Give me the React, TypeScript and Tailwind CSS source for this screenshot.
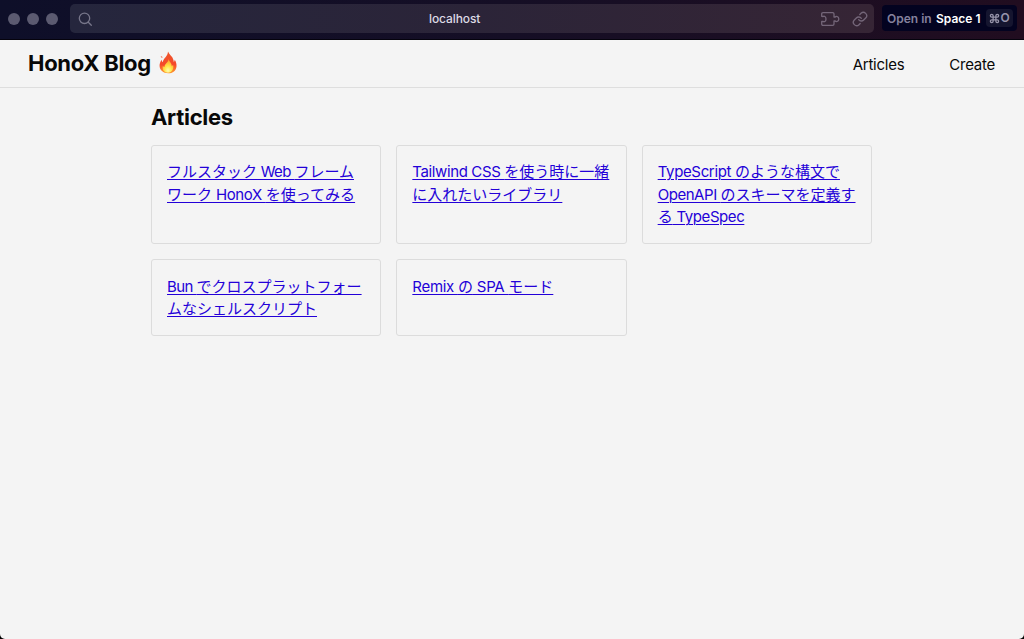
import React from 'react';

type Run = { text: string; latin?: string };

const articles: Run[][][] = [
  [
    [{ text: 'フルスタック' }, { text: ' Web ', latin: 'tracking-[-0.6px]' }, { text: 'フレーム' }],
    [{ text: 'ワーク' }, { text: ' HonoX ', latin: 'tracking-[-0.35px]' }, { text: 'を使ってみる' }],
  ],
  [
    [{ text: 'Tailwind CSS ', latin: 'tracking-[-0.38px]' }, { text: 'を使う時に一緒' }],
    [{ text: 'に入れたいライブラリ' }],
  ],
  [
    [{ text: 'TypeScript ', latin: 'tracking-[-0.35px]' }, { text: 'のような構文で' }],
    [{ text: 'OpenAPI ', latin: 'tracking-[-0.45px]' }, { text: 'のスキーマを定義す' }],
    [{ text: 'る' }, { text: ' TypeSpec', latin: 'tracking-[-0.42px]' }],
  ],
  [
    [{ text: 'Bun ', latin: 'tracking-[-0.55px]' }, { text: 'でクロスプラットフォー' }],
    [{ text: 'ムなシェルスクリプト' }],
  ],
  [
    [{ text: 'Remix ', latin: 'tracking-[-0.3px]' }, { text: 'の' }, { text: ' SPA ', latin: 'tracking-[-0.3px]' }, { text: 'モード' }],
  ],
];

function Flame() {
  return (
    <svg viewBox="0 0 20 24" className="h-[23px] w-[20px]" aria-hidden="true">
      <defs>
        <linearGradient id="outer" x1="0" y1="0" x2="0" y2="1">
          <stop offset="0" stopColor="#ed582b" />
          <stop offset="0.6" stopColor="#f5482a" />
          <stop offset="1" stopColor="#ff9a2e" />
        </linearGradient>
        <radialGradient id="inner" cx="0.5" cy="0.85" r="0.8">
          <stop offset="0" stopColor="#fffbb0" />
          <stop offset="0.4" stopColor="#ffe64a" />
          <stop offset="1" stopColor="#ff9526" />
        </radialGradient>
      </defs>
      <path d="M10 .5c1 3 4.700 5 5.600 8.500.4 1 .3 1.800.4 2.500.7-.6 1-1.400 1-2.300 1.500 2.300 2 4.300 1.900 6.600C18.600 20.300 15 23.300 10.200 23.300 5 23.300 1.200 20 1.200 15.500c0-2.800 1-4.700 2.100-6.500.2 1.200.5 2 1.200 2.700C5.200 7.500 9.800 5.500 10 .5z" fill="url(#outer)" />
      <path d="M10.700 8c.2 3.200 3.400 4.200 3.200 7.800.7-.3 1.100-.8 1.400-1.500 1.200 4.300-1.200 8.300-5.200 8.300-4.200 0-6.500-3.300-5.500-7.300.5.900 1 1.300 1.700 1.500C6.300 13 10.500 12 10.700 8z" fill="url(#inner)" />
      <path d="M2.500 5.200c1.300.2 2 1 1.600 2.200C3 7 2.400 6.300 2.500 5.200z" fill="#f47b61" />
    </svg>
  );
}

function BrowserBar() {
  return (
    <div className="flex h-10 shrink-0 items-start border-b border-[#05030d] bg-linear-to-r from-[#0e0f29] via-[#150e25] to-[#210d20]">
      <div className="flex h-[38px] w-[70px] items-center gap-[7px] pl-2">
        <i className="size-3 rounded-full bg-[#5b5a70]" />
        <i className="size-3 rounded-full bg-[#5b5a70]" />
        <i className="size-3 rounded-full bg-[#5b5a70]" />
      </div>
      <div className="mt-1 flex h-[29px] w-[804px] items-center rounded-[5px] bg-linear-to-r from-[#25263d] via-[#2b2438] to-[#362535] pr-1.5 pl-2">
        <svg viewBox="0 0 14 14" className="size-[14px] fill-none stroke-[#77768a] stroke-[1.3]">
          <circle cx="6.500" cy="6.300" r="5.200" />
          <path d="m10.300 10.200 3 3" strokeLinecap="round" />
        </svg>
        <span className="ml-[337px] w-[53px] pt-px text-[12px] leading-4 font-medium tracking-[-0.1px] text-[#dddae5]">localhost</span>
        <span className="flex-1" />
        <svg viewBox="0 0 20 16" className="mr-3 h-4 w-5 fill-none stroke-[#746679] stroke-[1.3]" strokeLinejoin="round">
          <path d="M1.700 5.300V3Q1.700 1.700 3 1.700H12.700Q14 1.700 14 3V6H15.200C15.800 5.200 18.800 5 18.800 8S15.800 10.800 15.200 10H14V13Q14 14.300 12.700 14.300H3Q1.700 14.300 1.700 13V10.500H3.200C4 11 6 10.800 6 8S4 5 3.200 5.500Z" />
        </svg>
        <svg viewBox="0 0 24 24" className="size-4 fill-none stroke-[#746679] stroke-2" strokeLinecap="round" strokeLinejoin="round">
          <path d="M10 13a5 5 0 0 0 7.540.540l3-3a5 5 0 0 0-7.070-7.070l-1.720 1.710" />
          <path d="M14 11a5 5 0 0 0-7.540-.540l-3 3a5 5 0 0 0 7.070 7.070l1.710-1.710" />
        </svg>
      </div>
      <div className="mt-[5px] ml-2 flex h-[26px] w-[135px] items-center rounded-[4px] bg-[#030320] pl-[5px] text-[12px] font-semibold whitespace-nowrap">
        <span className="w-[49px] pt-px text-[#85819d]">Open in</span>
        <span className="w-[50px] pt-px text-white">Space 1</span>
        <span className="flex h-[18px] w-[27px] items-center justify-center rounded-[4px] bg-[#15152f] text-[#9794aa]">
          <svg viewBox="0 0 24 24" className="size-[11px] fill-none stroke-current stroke-[2.800]">
            <path d="M15 6v12a3 3 0 1 0 3-3H6a3 3 0 1 0 3 3V6a3 3 0 1 0-3 3h12a3 3 0 1 0-3-3" />
          </svg>
          <span>O</span>
        </span>
      </div>
    </div>
  );
}

export default function App() {
  return (
    <div className="h-[639px] overflow-hidden bg-black font-['Inter','Noto_Sans_CJK_JP',sans-serif]">
      <div className="flex h-full flex-col overflow-hidden rounded-b-[5px] bg-[#f4f4f4] text-[#080808]">
        <BrowserBar />
        <header className="flex h-12 shrink-0 items-center justify-between border-b border-[#dedede] pr-[29px] pl-7">
          <h1 className="flex items-center gap-[6px] pb-[2px] text-[22px] leading-7 font-bold">
            <span className="w-[124px] tracking-[-0.3px] whitespace-nowrap">HonoX Blog</span>
            <Flame />
          </h1>
          <nav className="flex gap-[45px] pt-[2px] text-[15px] leading-6 tracking-[-0.25px]">
            <a>Articles</a>
            <a>Create</a>
          </nav>
        </header>
        <main className="ml-[151px] w-[721px] pt-[15px]">
          <h2 className="text-[22px] leading-7 font-bold tracking-[-0.3px]">Articles</h2>
          <ul className="mt-[13.500px] grid grid-cols-3 gap-[15px]">
            {articles.map((lines, i) => (
              <li key={i} className="rounded-[3px] border border-[#dcdcdc] px-[15px] pt-[15.500px] pb-[14.500px]">
                <a className="block text-[15px] leading-[22.5px] whitespace-pre text-[#2300d8]">
                  {lines.map((runs, j) => (
                    <span key={j} className="block h-[22.5px]">
                      <span className="underline decoration-1 underline-offset-2">
                        {runs.map((run, k) => (
                          <span key={k} className={run.latin}>{run.text}</span>
                        ))}
                      </span>
                    </span>
                  ))}
                </a>
              </li>
            ))}
          </ul>
        </main>
      </div>
    </div>
  );
}
